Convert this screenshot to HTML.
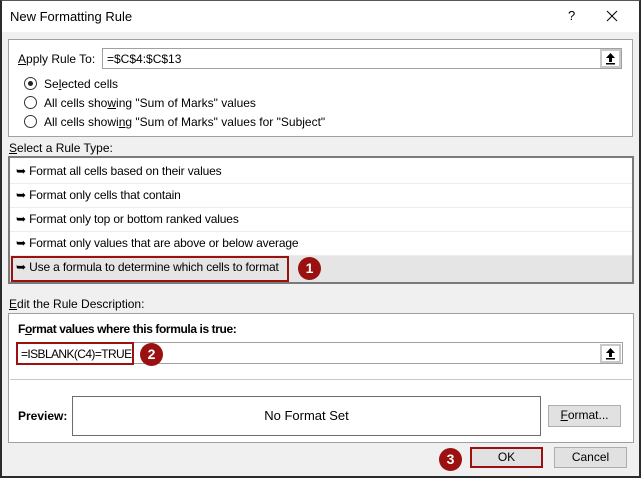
<!DOCTYPE html>
<html><head><style>
*{margin:0;padding:0;box-sizing:border-box}
body{width:641px;height:478px;overflow:hidden;font-family:"Liberation Sans",sans-serif;font-size:12px;color:#000;background:#f0f0f0;position:relative}
.a{position:absolute}
.t{position:absolute;white-space:nowrap;line-height:14px}
.box{position:absolute;background:#fff;border:1px solid #a0a0a0}
.rad{position:absolute;width:13px;height:13px;border:1px solid #333;border-radius:50%;background:#fff}
.item{position:absolute;left:10px;width:622px;height:24px;border-bottom:1px solid #ececec;line-height:23px;padding-left:6px;letter-spacing:-0.15px}
.btn{position:absolute;background:#e1e1e1;border:1px solid #adadad;text-align:center;line-height:19px}
.num{position:absolute;width:23px;height:23px;border-radius:50%;background:#9b1010;color:#fff;font-weight:bold;font-size:14px;text-align:center;line-height:23px}
.up{position:absolute;width:21px;height:19px;background:#fff;border:2px solid #c8c8c8}
u{text-decoration:underline}
</style></head><body>
<div class="a" style="left:0;top:0;width:641px;height:478px;border:2px solid #2b2b2b;border-top:1px solid #555"></div>
<div class="a" style="left:2px;top:1px;width:637px;height:31px;background:#fff"></div>
<div class="t" style="left:10px;top:10px;font-size:13px">New Formatting Rule</div>
<div class="t" style="left:568px;top:9px;font-size:13px">?</div>
<svg class="a" style="left:606px;top:10px" width="12" height="12"><path d="M1 1L11 11M11 1L1 11" stroke="#000" stroke-width="1"/></svg>

<div class="box" style="left:8px;top:39px;width:625px;height:98px"></div>
<div class="t" style="left:18px;top:52px"><u>A</u>pply Rule To:</div>
<div class="a" style="left:102px;top:48px;width:520px;height:21px;border:1px solid #a0a0a0;background:#fff"></div>
<div class="t" style="left:107px;top:52px">=$C$4:$C$13</div>
<div class="up" style="left:600px;top:49px"><svg width="17" height="15"><path d="M8.5 2L4 7H7V11H10V7H13Z" fill="#000"/><rect x="4" y="12" width="9" height="1.5" fill="#000"/></svg></div>
<div class="rad" style="left:24px;top:77px"></div><div class="a" style="left:28px;top:81px;width:5px;height:5px;border-radius:50%;background:#222"></div>
<div class="t" style="left:44px;top:77px">Se<u>l</u>ected cells</div>
<div class="rad" style="left:24px;top:96px"></div>
<div class="t" style="left:44px;top:96px">All cells sho<u>w</u>ing "Sum of Marks" values</div>
<div class="rad" style="left:24px;top:115px"></div>
<div class="t" style="left:44px;top:115px">All cells showi<u>n</u>g "Sum of Marks" values for "Subject"</div>

<div class="t" style="left:9px;top:141px"><u>S</u>elect a Rule Type:</div>
<div class="box" style="left:8px;top:156px;width:626px;height:128px;border:2px solid #7a7a7a"></div>
<div class="item" style="top:160px">➥ Format all cells based on their values</div>
<div class="item" style="top:184px">➥ Format only cells that contain</div>
<div class="item" style="top:208px">➥ Format only top or bottom ranked values</div>
<div class="item" style="top:232px">➥ Format only values that are above or below average</div>
<div class="item" style="top:256px;background:#e5e5e5;border:none;height:26px">➥ Use a formula to determine which cells to format</div>
<div class="a" style="left:11px;top:256px;width:278px;height:26px;border:2px solid #9b1010"></div>
<div class="num" style="left:298px;top:257px">1</div>

<div class="t" style="left:9px;top:297px"><u>E</u>dit the Rule Description:</div>
<div class="box" style="left:8px;top:313px;width:626px;height:130px"></div>
<div class="t" style="left:18px;top:322px;font-weight:bold;letter-spacing:-0.4px">F<u>o</u>rmat values where this formula is true:</div>
<div class="a" style="left:16px;top:342px;width:607px;height:22px;border:1px solid #a0a0a0;background:#fff"></div>
<div class="up" style="left:600px;top:344px"><svg width="17" height="15"><path d="M8.5 2L4 7H7V11H10V7H13Z" fill="#000"/><rect x="4" y="12" width="9" height="1.5" fill="#000"/></svg></div>
<div class="a" style="left:16px;top:342px;width:118px;height:23px;border:2px solid #9b1010"></div>
<div class="t" style="left:21px;top:347px;letter-spacing:-0.6px">=ISBLANK(C4)=TRUE</div>
<div class="num" style="left:140px;top:343px">2</div>
<div class="a" style="left:10px;top:379px;width:622px;height:1px;background:#c8c8c8"></div>
<div class="t" style="left:18px;top:409px;font-weight:bold">Preview:</div>
<div class="a" style="left:72px;top:396px;width:469px;height:40px;border:1px solid #6d6d6d;background:#fff;text-align:center;line-height:38px;font-size:13px">No Format Set</div>
<div class="btn" style="left:548px;top:405px;width:73px;height:22px"><u>F</u>ormat...</div>

<div class="num" style="left:439px;top:448px">3</div>
<div class="btn" style="left:470px;top:447px;width:73px;height:21px;border:2px solid #9b1010;line-height:17px">OK</div>
<div class="btn" style="left:554px;top:447px;width:73px;height:21px">Cancel</div>
</body></html>
